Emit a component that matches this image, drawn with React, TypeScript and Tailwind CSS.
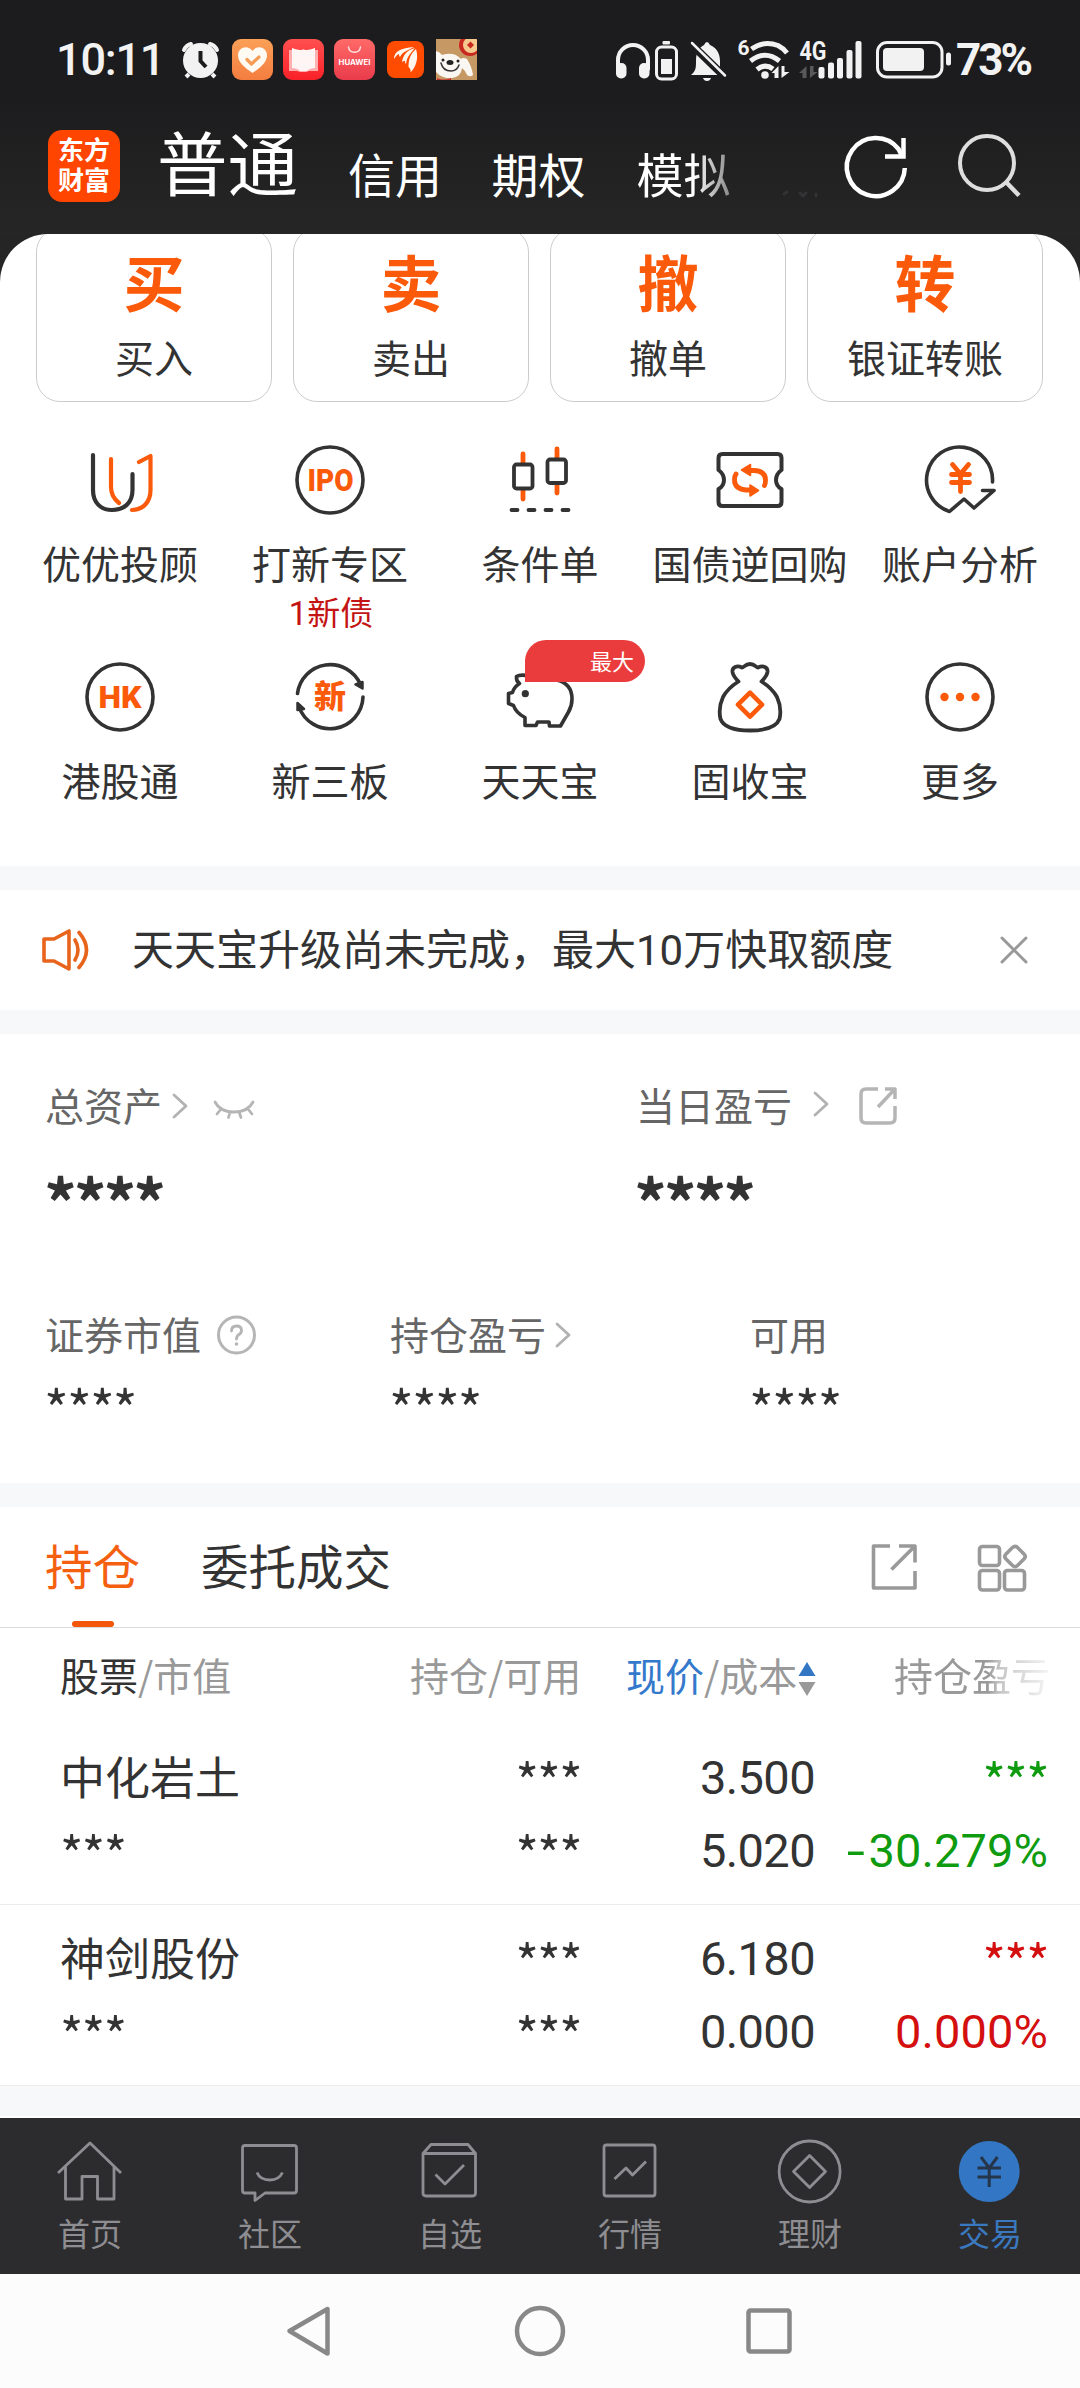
import type { ReactNode } from "react";

const INK = "#333333";
const ORANGE = "#fa5a0a";

type IconProps = { box: string; className: string; children: ReactNode };

function Icon({ box, className, children }: IconProps) {
  return (
    <svg viewBox={box} className={className} fill="none" strokeLinecap="round" strokeLinejoin="round">
      {children}
    </svg>
  );
}

function StatusBar() {
  return (
    <div className="flex h-[100px] pt-[39px]">
      <span className="ml-[56px] w-[122px] whitespace-nowrap font-['Roboto'] text-[45px] font-medium leading-[42px] tracking-[-1.2px] text-[#f2f2f2]">
        10:11
      </span>
      <Icon box="178 37 304 46" className="-mt-[2px] h-[46px] w-[304px] shrink-0">
        <g stroke="#f2f2f2" strokeWidth="5">
          <path d="M189 74l-3 3M212 74l3 3" strokeLinecap="butt" strokeWidth="4" />
          <path d="M184 50a11 11 0 0 1 7-6M217 50a11 11 0 0 0-7-6" strokeWidth="4" />
        </g>
        <circle cx="200.5" cy="60.500" r="17.500" fill="#f2f2f2" />
        <path d="M200.500 51v10l5.500 6" stroke="#1c1c1e" strokeWidth="4" strokeLinecap="butt" strokeLinejoin="miter" />
        <defs>
          <linearGradient id="health" x1="0" y1="0" x2="0" y2="1">
            <stop stopColor="#fca057" />
            <stop offset="1" stopColor="#f47d3f" />
          </linearGradient>
          <linearGradient id="reader" x1="0" y1="0" x2="0" y2="1">
            <stop stopColor="#ff5050" />
            <stop offset="1" stopColor="#fa2128" />
          </linearGradient>
          <linearGradient id="store" x1="0" y1="0" x2="0" y2="1">
            <stop stopColor="#ff6a68" />
            <stop offset="1" stopColor="#e93b4b" />
          </linearGradient>
          <clipPath id="dog">
            <rect x="436" y="39" width="41" height="41" />
          </clipPath>
        </defs>
        <rect x="232" y="39" width="41" height="41" rx="9" fill="url(#health)" />
        <path d="M252.500 73C244 67 238 62 238 55.500C238 47 248 44.500 252.500 51C257 44.500 267 47 267 55.500C267 62 261 67 252.500 73Z" fill="#fffaf2" />
        <path d="M247 59.500l4.500 4.500l7.500-7" stroke="#f49b55" strokeWidth="3.200" />
        <rect x="283" y="39" width="41" height="41" rx="9" fill="url(#reader)" />
        <path d="M289 50l3 0v-2q6 3 11.500 1.500q5.500 1.500 11.500-1.500v2l3 0v21h-9l-3 1h-6l-3-1h-8z" fill="#ffb0ae" />
        <path d="M292 48q6 3 11.500 1.500q5.500 1.500 11.500-1.500v20q-5 0-8 3h-7q-3-3-8-3z" fill="#fff5f4" />
        <rect x="334" y="39" width="41" height="41" rx="9" fill="url(#store)" />
        <path d="M348.500 47c1 7 11 7 12 0" stroke="#ffe3e3" strokeWidth="1.500" />
        <text x="338.500" y="65" textLength="32" lengthAdjust="spacingAndGlyphs" fontFamily="Inter" fontSize="7.200" fontWeight="700" fill="#fff">
          HUAWEI
        </text>
        <rect x="387" y="41" width="37" height="37" rx="8" fill="#ff4c00" />
        <path d="M394 59c0-8 7-11 20-12c-5 3-11 4-14 10c-1-1-1-2-1-3c-3 1-3 3-5 5zM402 62c1-7 5-12 13-14c-4 5-8 8-9 16c-1-1-1-2-1-3c-1 0-2 0-3 1zM408.500 67c0-8 2-13 7.500-18c2.500 8 1 17-5.500 23.500c.5-3-.5-4-2-5.500z" fill="#fff6ee" />
        <g clipPath="url(#dog)">
          <rect x="436" y="39" width="41" height="41" fill="#c69864" />
          <path d="M436 51q4 1 6 4q12-4 19 4q2-2 6 0q5 8 6 16q-5 4-8-4l-3-3q-1 9-10 10q-10 1-16-6z" fill="#faf7f3" />
          <path d="M441 63q2 8 10 8q6 0 8-6" stroke="#333" strokeWidth="1.500" />
          <ellipse cx="450" cy="62.500" rx="3.500" ry="2.500" fill="#222" />
          <circle cx="443" cy="60" r="1.500" fill="#222" />
          <circle cx="458" cy="61" r="1.500" fill="#222" />
          <path d="M437 78q6 3 14 0v3h-14z" fill="#c9302c" />
          <circle cx="470" cy="45" r="11" fill="#c8281f" />
          <circle cx="471" cy="45" r="8" fill="#f6c98e" />
          <path d="M470.500 41.500l3.500 3.500l-3.500 3.500l-3.500-3.500z" fill="#c8281f" />
        </g>
      </Icon>
      <Icon box="610 37 345 46" className="-mt-[2px] ml-[128px] h-[46px] w-[345px] shrink-0">
        <path d="M618 69V60a15 15 0 0 1 30 0V69" stroke="#f2f2f2" strokeWidth="4" />
        <rect x="616" y="63" width="10.500" height="15.500" rx="5" fill="#f2f2f2" />
        <rect x="639" y="63" width="10.500" height="15.500" rx="5" fill="#f2f2f2" />
        <rect x="662.500" y="41" width="7.500" height="3.500" rx="1" fill="#f2f2f2" />
        <rect x="656.500" y="47" width="20" height="32" rx="5" stroke="#f2f2f2" strokeWidth="3" />
        <rect x="661" y="59" width="11" height="15" fill="#f2f2f2" />
        <path d="M691 75c5-4 5-7 5-15c0-8 4-13 8-15q3-6 6 0c7 3 10 9 10 16v6c0 3 4 5 5 8z" fill="#f2f2f2" />
        <path d="M703 78h8q-1 3-4 3t-4-3z" fill="#f2f2f2" />
        <path d="M690 43l35 34" stroke="#1c1c1e" strokeWidth="8" strokeLinecap="butt" />
        <path d="M692 43l33 32.500" stroke="#f2f2f2" strokeWidth="2.500" />
        <text x="737.500" y="55" fontFamily="Roboto" fontSize="21" fontWeight="700" fill="#f2f2f2">
          6
        </text>
        <g stroke="#f2f2f2" strokeWidth="5" strokeLinecap="butt">
          <path d="M751.500 49Q764 40 778 45.500Q783 48 787 53" />
          <path d="M750.500 61Q765 49.500 779.500 61" />
          <path d="M757 69.500Q765 63 773 69" />
        </g>
        <circle cx="765" cy="75" r="3.800" fill="#f2f2f2" />
        <path d="M778.500 66v12h-4v-5h-3zM781.500 78V66h3v6h5z" fill="#f2f2f2" />
        <text x="799.500" y="59.500" textLength="27" lengthAdjust="spacingAndGlyphs" fontFamily="Roboto" fontSize="25" fontWeight="700" fill="#f2f2f2">
          4G
        </text>
        <path d="M806.500 66v12h-4v-5h-3.500zM810 78V66h3.500v6h4z" fill="#58585a" />
        <g fill="#f2f2f2">
          <rect x="818.500" y="67" width="6" height="11.500" rx="2" />
          <rect x="828" y="62.500" width="6" height="16" rx="2" />
          <rect x="837" y="58" width="6" height="20.500" rx="2" />
          <rect x="846.500" y="50" width="6" height="28.500" rx="2" />
          <rect x="855.500" y="41" width="6" height="37.500" rx="2" />
          <rect x="883" y="48" width="41" height="23" rx="4" />
          <rect x="946" y="52.500" width="5" height="13" rx="2.500" />
        </g>
        <rect x="877.500" y="42.500" width="64.500" height="34.500" rx="9.500" stroke="#f2f2f2" strokeWidth="3" />
      </Icon>
      <span className="ml-[1px] whitespace-nowrap font-['Roboto'] text-[44px] font-bold leading-[42px] tracking-[-3px] text-[#f2f2f2]">
        73%
      </span>
    </div>
  );
}

function AccountHeader() {
  return (
    <div className="flex h-[134px] text-white">
      <div className="ml-[48px] mt-[30px] flex h-[72px] w-[72px] shrink-0 flex-col items-center rounded-[14px] bg-[#ff4500] pt-[4px] text-[26px] font-bold leading-[30px]">
        <span>东方</span>
        <span>财富</span>
      </div>
      <span className="ml-[37px] mt-[20px] w-[191px] shrink-0 text-[70.500px] leading-[80px]">普通</span>
      <span className="mt-[48px] w-[143.500px] shrink-0 text-[47px] leading-[50px]">信用</span>
      <span className="mt-[48px] w-[145px] shrink-0 text-[47px] leading-[50px]">期权</span>
      <span className="mt-[48px] w-[94px] shrink-0 text-[47px] leading-[50px] [mask-image:linear-gradient(90deg,#000_60%,rgba(0,0,0,0.45)_100%)]">
        模拟
      </span>
      <Icon box="780 130 250 76" className="ml-[49px] mt-[30px] h-[76px] w-[250px] shrink-0">
        <path d="M784 194l3-2M800 193l3 3l3-3M816 194v2" stroke="#333335" strokeWidth="3" />
        <path d="M904.800 168A29 29 0 1 1 898.500 149L902 156" stroke="#fff" strokeWidth="4.500" strokeLinecap="butt" />
        <path d="M903.500 138v18.500h-18.500" stroke="#fff" strokeWidth="4.500" strokeLinecap="butt" strokeLinejoin="miter" />
        <circle cx="987" cy="163" r="27" stroke="#dedede" strokeWidth="4" />
        <path d="M1006 182l13 13.500" stroke="#dedede" strokeWidth="4.500" strokeLinecap="butt" />
      </Icon>
    </div>
  );
}

const trades = [
  ["买", "买入"],
  ["卖", "卖出"],
  ["撤", "撤单"],
  ["转", "银证转账"],
];

function TradeCards() {
  return (
    <div className="-mt-[6px] flex h-[174px] gap-[21px] pl-[36px]">
      {trades.map(([glyph, label]) => (
        <div key={label} className="flex w-[236px] shrink-0 flex-col items-center rounded-[24px] border border-[#cccccc] pt-[17px]">
          <span className="text-[61px] font-bold leading-[70px] text-[#fa5a0a]">{glyph}</span>
          <span className="mt-[15px] text-[39px] leading-[50px]">{label}</span>
        </div>
      ))}
    </div>
  );
}

function Ring({ cx, cy }: { cx: number; cy: number }) {
  return <circle cx={cx} cy={cy} r="33" stroke={INK} strokeWidth="3.600" />;
}

const shortcuts: { label: string; box: string; note?: string; badge?: string; art: ReactNode }[] = [
  {
    label: "优优投顾",
    box: "80 440 80 80",
    art: (
      <g strokeWidth="4.200">
        <path d="M93 455V490C93 503 101 510 112 510C124 510 132.500 503 132.500 490V474" stroke={INK} />
        <path d="M111 459V487C111 494 114 499 119 503M139 462L150.500 456V490C150.500 502 143 510 132 510" stroke={ORANGE} />
      </g>
    ),
  },
  {
    label: "打新专区",
    note: "1新债",
    box: "290 440 80 80",
    art: (
      <>
        <Ring cx={330} cy={480} />
        <text x="307.500" y="491.200" textLength="46" lengthAdjust="spacingAndGlyphs" fontFamily="Roboto" fontSize="31.500" fontWeight="900" fill={ORANGE}>
          IPO
        </text>
      </>
    ),
  },
  {
    label: "条件单",
    box: "500 440 80 80",
    art: (
      <>
        <path d="M523 454V499M557 449V493" stroke={ORANGE} strokeWidth="4.800" />
        <rect x="514" y="464.500" width="18.500" height="24" rx="2.500" fill="#fff" stroke={INK} strokeWidth="3.800" />
        <rect x="547.500" y="459.500" width="18.500" height="23.500" rx="2.500" fill="#fff" stroke={INK} strokeWidth="3.800" />
        <path d="M511.500 510h6M528.500 510h6M545.500 510h6M562.500 510h6" stroke={INK} strokeWidth="3.800" />
      </>
    ),
  },
  {
    label: "国债逆回购",
    box: "710 440 80 80",
    art: (
      <>
        <path
          d="M722.500 454H777.500Q781.500 454 781.500 458V470Q776 474 776 480Q776 486 781.500 489V502Q781.500 506 777.500 506H722.500Q718.500 506 718.500 502V489Q724 486 724 480Q724 474 718.500 470V458Q718.500 454 722.500 454Z"
          stroke={INK}
          strokeWidth="4"
        />
        <path d="M749 470.500H754Q765.500 471 765.500 480Q765.500 484 764.500 485.500M751 490H746Q734.500 489 734.500 480Q734.500 476 736 474" stroke={ORANGE} strokeWidth="4.800" />
        <path d="M741.500 470L750.500 464.500V475.500ZM758.500 490.500L750 485V496Z" fill={ORANGE} stroke={ORANGE} strokeWidth="1.500" />
      </>
    ),
  },
  {
    label: "账户分析",
    box: "920 440 80 80",
    art: (
      <>
        <path d="M992.500 482A33 33 0 1 0 949.500 511.500L964 499L974 508L994 490.500H982.500" stroke={INK} strokeWidth="3.600" />
        <path d="M952.500 464.500L960.500 474L968.500 464.500M960.500 474V491.500M951.500 474.500H969.500M951.500 482.500H969.500" stroke={ORANGE} strokeWidth="4.800" />
      </>
    ),
  },
  {
    label: "港股通",
    box: "80 657 80 80",
    art: (
      <>
        <Ring cx={120} cy={697} />
        <text x="98.500" y="708.200" textLength="43" lengthAdjust="spacingAndGlyphs" fontFamily="Roboto" fontSize="31.500" fontWeight="900" fill={ORANGE}>
          HK
        </text>
      </>
    ),
  },
  {
    label: "新三板",
    box: "290 657 80 80",
    art: (
      <>
        <path d="M297.500 693.500A33 33 0 0 1 360.500 684.500M363 697A33 33 0 0 1 299 707" stroke={INK} strokeWidth="3.600" />
        <path d="M355.500 684.500L362.500 682V688.500ZM297.500 703L304 709L297.500 710Z" fill={INK} stroke={INK} strokeWidth="2.500" />
        <text x="314" y="708" fontFamily="Noto Sans CJK SC" fontSize="32" fontWeight="900" fill={ORANGE}>
          新
        </text>
      </>
    ),
  },
  {
    label: "天天宝",
    badge: "最大",
    box: "500 657 80 80",
    art: (
      <>
        <path
          d="M530 676Q520 674 516.500 676.500Q516 681 519.500 683.500Q514 687 512.500 692.500L508.500 693.500V703.500L513.500 705.500Q516 713 525 717.500V725.500H536L537.500 722H549L549.500 726H560.500L568.500 712Q572 706 572 699Q572 683 556 680Q542 676 530 676Z"
          stroke={INK}
          strokeWidth="3.600"
        />
        <circle cx="525.300" cy="693.700" r="3.600" fill={INK} />
      </>
    ),
  },
  {
    label: "固收宝",
    box: "710 657 80 80",
    art: (
      <>
        <path
          d="M738.500 681.500Q728 688 723 697Q718 708 720.500 719Q725 730.500 750 730.500Q775 730.500 779.500 719Q782 708 777 697Q772 688 761.500 681.500C764 679 767 675 767.500 672C768 667 763 665 758 667.500C756 667.500 755 664 750 664C745 664 744 667.500 742 667.500C737 665 732 667 732.500 672C733 675 736 679 738.500 681.500"
          stroke={INK}
          strokeWidth="3.800"
        />
        <path d="M738 704.700L750 692.700L762 704.700L750 716.700Z" stroke={ORANGE} strokeWidth="4.600" />
      </>
    ),
  },
  {
    label: "更多",
    box: "920 657 80 80",
    art: (
      <>
        <Ring cx={960} cy={697} />
        <g fill={ORANGE}>
          <circle cx="944.500" cy="697" r="4.200" />
          <circle cx="960" cy="697" r="4.200" />
          <circle cx="975.500" cy="697" r="4.200" />
        </g>
      </>
    ),
  },
];

function Shortcuts() {
  return (
    <div className="mt-[38px] grid auto-rows-[217px] grid-cols-[repeat(5,210px)] pl-[15px]">
      {shortcuts.map((s) => (
        <div key={s.label} className="relative flex flex-col items-center">
          <Icon box={s.box} className="h-[80px] w-[80px]">
            {s.art}
          </Icon>
          <span className="mt-[17px] whitespace-nowrap text-[39px] leading-[50px]">{s.label}</span>
          {s.note && (
            <span className="ml-[2px] mt-[7px] font-['Roboto','Noto_Sans_CJK_SC'] text-[33px] leading-[40px] text-[#c41414]">{s.note}</span>
          )}
          {s.badge && (
            <span className="absolute left-[90px] top-[-17px] flex h-[42px] w-[120px] items-center justify-end rounded-[21px] rounded-bl-none bg-[#ea3c3c] pr-[11px] text-[22px] leading-[40px] text-white">
              <span className="-mt-[2px]">{s.badge}</span>
            </span>
          )}
        </div>
      ))}
    </div>
  );
}

function Notice() {
  return (
    <div className="flex h-[120px] items-center bg-white">
      <Icon box="40 925 54 50" className="ml-[40px] h-[50px] w-[54px]">
        <path d="M44 939H54L69 931V969L54 961H44Z" stroke="#e8641c" strokeWidth="3.600" />
        <path d="M75 940Q81 950 75 960M79 932.500Q94 950 79 967.500" stroke="#e8641c" strokeWidth="3.600" />
      </Icon>
      <span className="mt-[1px] ml-[38px] w-[867px] whitespace-nowrap font-['Roboto','Noto_Sans_CJK_SC'] text-[42px] leading-[50px]">
        天天宝升级尚未完成，最大10万快取额度
      </span>
      <Icon box="999 935 30 30" className="h-[30px] w-[30px]">
        <path d="M1002 938L1026 962M1026 938L1002 962" stroke="#999" strokeWidth="3" />
      </Icon>
    </div>
  );
}

function Chevron({ className }: { className: string }) {
  return (
    <Icon box="0 0 20 28" className={className}>
      <path d="M4 3L16 14L4 25" stroke="#b2b2b2" strokeWidth="2.800" />
    </Icon>
  );
}

function Assets() {
  return (
    <div className="h-[449px] bg-white pl-[45px]">
      <div className="flex pt-[45px] text-[39px] leading-[50px] text-[#666]">
        <div className="flex w-[591px]">
          <span>总资产</span>
          <Chevron className="ml-[8px] mt-[13px] h-[28px] w-[20px]" />
          <Icon box="212 1095 44 28" className="ml-[22px] mt-[16px] h-[28px] w-[44px]">
            <path d="M215 1102Q220 1112 234 1112Q248 1112 253 1102M221 1109L217 1114M230 1112L228.500 1117.500M239 1112L241 1117.500M248 1109L252 1114" stroke="#b5b5b5" strokeWidth="2.800" />
          </Icon>
        </div>
        <span>当日盈亏</span>
        <Chevron className="ml-[19px] mt-[11px] h-[28px] w-[20px]" />
        <Icon box="857 1083 44 44" className="ml-[25px] mt-[5px] h-[44px] w-[44px]">
          <path d="M879 1088H867Q862 1088 862 1093V1117Q862 1122 867 1122H891Q896 1122 896 1117V1105M886 1088H896V1098M895 1089L879 1106" stroke="#b5b5b5" strokeWidth="3.500" strokeLinecap="butt" />
        </Icon>
      </div>
      <div className="-ml-[1px] mt-[31px] flex h-[60px] text-[65px] font-bold leading-[81px] tracking-[-3.200px]">
        <span className="w-[590px]">****</span>
        <span>****</span>
      </div>
      <div className="mt-[88px] flex text-[39px] leading-[50px] text-[#666]">
        <div className="flex w-[345px]">
          <span>证券市值</span>
          <Icon box="215 1314 42 42" className="ml-[14px] mt-[6px] h-[42px] w-[42px]">
            <circle cx="236.500" cy="1335" r="18" stroke="#b5b5b5" strokeWidth="3" />
            <path d="M231.500 1331Q231.500 1326 236.500 1326Q241.500 1326 241.500 1330.500Q241.500 1333 239 1334.500Q236.500 1336 236.500 1339" stroke="#b5b5b5" strokeWidth="2.800" />
            <circle cx="236.500" cy="1344" r="1.800" fill="#b5b5b5" />
          </Icon>
        </div>
        <div className="flex w-[360px]">
          <span>持仓盈亏</span>
          <Chevron className="ml-[7px] mt-[13px] h-[28px] w-[20px]" />
        </div>
        <span>可用</span>
      </div>
      <div className="-ml-[1px] mt-[22px] flex text-[53px] leading-[54px] tracking-[-1.800px]">
        <span className="w-[345px]">****</span>
        <span className="w-[360px]">****</span>
        <span>****</span>
      </div>
    </div>
  );
}

const positions = [
  { name: "中化岩土", price: "3.500", cost: "5.020", sign: "-", pct: "30.279%", tone: "text-[#0f9b0f]" },
  { name: "神剑股份", price: "6.180", cost: "0.000", sign: "", pct: "0.000%", tone: "text-[#d40f0f]" },
];

function Holdings() {
  return (
    <div className="bg-white">
      <div className="flex h-[121px] border-b border-[#dcdcdc] pl-[45px] text-[47.500px] leading-[60px]">
        <div className="relative mt-[28px] h-[92px] w-[95px] text-[#f4600f]">
          持仓
          <span className="absolute bottom-0 left-[27px] h-[6.500px] w-[42px] rounded-[3px] bg-[#f4560a]" />
        </div>
        <span className="ml-[61px] mt-[28px] w-[665px]">委托成交</span>
        <Icon box="866 1538 166 60" className="mt-[31px] h-[60px] w-[166px]">
          <g stroke="#999" strokeWidth="3.600" strokeLinecap="butt">
            <path d="M890 1546H873.500V1588H915V1571M899 1546H915V1562.500M914 1547L891.500 1569.500" />
            <rect x="979.500" y="1546.500" width="20" height="19" rx="3" />
            <rect x="979.500" y="1570.500" width="20" height="19.500" rx="3" />
            <rect x="1004.500" y="1570.500" width="20" height="19.500" rx="3" />
            <path d="M1017.500 1547.500L1024 1554Q1026.500 1556.500 1024 1559L1017.500 1565.500Q1015 1568 1012.500 1565.500L1006 1559Q1003.500 1556.500 1006 1554L1012.500 1547.500Q1015 1545 1017.500 1547.500Z" />
          </g>
        </Icon>
      </div>
      <div className="flex h-[96px] whitespace-nowrap pt-[21px] text-[39px] leading-[50px] text-[#999]">
        <span className="ml-[60px] w-[350px]">
          <span className="text-[#333]">股票</span>/市值
        </span>
        <span className="w-[216px]">持仓/可用</span>
        <span className="w-[171px]">
          <span className="text-[#3579cc]">现价</span>/成本
        </span>
        <Icon box="797 1658 20 40" className="mt-[10px] h-[40px] w-[20px]">
          <path d="M798.500 1675L807 1661L815.500 1675Z" fill="#3377c4" />
          <path d="M798.500 1681L807 1695L815.500 1681Z" fill="#999" />
        </Icon>
        <span className="ml-[77px] [mask-image:linear-gradient(90deg,#000_60%,rgba(0,0,0,0.55)_68%,rgba(0,0,0,0.1)_100%)]">持仓盈亏</span>
      </div>
      {positions.map((p) => (
        <div key={p.name} className="grid h-[181px] grid-cols-[350px_171px_234px_233px] grid-rows-[73px_73px] border-b border-[#ebebeb] pl-[60px] pt-[16px] text-[50px] leading-[78px] tracking-[-1.500px]">
          <span className="text-[45px] leading-[72px] tracking-normal">{p.name}</span>
          <span className="text-right">***</span>
          <span className="text-right font-['Roboto'] text-[47px] leading-[76px] tracking-[-0.600px]">{p.price}</span>
          <span className={`text-right ${p.tone}`}>***</span>
          <span>***</span>
          <span className="text-right">***</span>
          <span className="text-right font-['Roboto'] text-[47px] leading-[76px] tracking-[-0.600px]">{p.cost}</span>
          <span className={`whitespace-nowrap text-right font-['Roboto'] text-[47px] leading-[76px] tracking-[0.100px] ${p.tone}`}>
            {p.sign && <span className="mr-[3px] inline-block origin-right scale-x-[1.400]">{p.sign}</span>}
            {p.pct}
          </span>
        </div>
      ))}
    </div>
  );
}

const tabs: { label: string; box: string; active?: boolean; art: ReactNode }[] = [
  {
    label: "首页",
    box: "54 2136 72 72",
    art: <path d="M58 2173L90 2143L121 2173M65.500 2167V2199H82V2176.500H97.500V2199H114V2167" />,
  },
  {
    label: "社区",
    box: "234 2136 72 72",
    art: <path d="M245 2145.500H294Q296.500 2145.500 296.500 2148V2190.500Q296.500 2193 294 2193H265L255 2200.500V2193H245Q242.500 2193 242.500 2190.500V2148Q242.500 2145.500 245 2145.500ZM257 2172.500Q260 2180 270 2180Q279 2180 282.500 2172.500" />,
  },
  {
    label: "自选",
    box: "414 2136 72 72",
    art: <path d="M423 2153.500H475.500V2193Q475.500 2196 472.500 2196H426Q423 2196 423 2193ZM423 2153.500L431 2144.500H468L475.500 2153.500M435.500 2174.500L445 2184L464 2165" />,
  },
  {
    label: "行情",
    box: "594 2136 72 72",
    art: <path d="M606.500 2145H652.500Q655 2145 655 2147.500V2193.500Q655 2196 652.500 2196H606.500Q604 2196 604 2193.500V2147.500Q604 2145 606.500 2145ZM614.500 2179L626 2168L632.500 2175L646 2161.500" />,
  },
  {
    label: "理财",
    box: "774 2136 72 72",
    art: (
      <>
        <circle cx="809.600" cy="2171.500" r="30.500" />
        <path d="M809.600 2155.500L825.500 2171.500L809.600 2187.500L793.500 2171.500Z" />
      </>
    ),
  },
  {
    label: "交易",
    box: "954 2136 72 72",
    active: true,
    art: (
      <>
        <circle cx="989.200" cy="2171.500" r="30.500" fill="#3377c4" stroke="none" />
        <path d="M981 2157L989.200 2168L997.500 2157M989.200 2168V2187M977.500 2168H1001M977.500 2177H1001" stroke="#26364a" strokeWidth="3" strokeLinecap="butt" />
      </>
    ),
  },
];

function TabBar() {
  return (
    <div className="grid h-[156px] grid-cols-6 bg-[#2c2c2e] pt-[18px]">
      {tabs.map((t) => (
        <div key={t.label} className="flex flex-col items-center">
          <svg viewBox={t.box} className="h-[72px] w-[72px]" fill="none" stroke="#8e8e92" strokeWidth="2.800" strokeLinejoin="round">
            {t.art}
          </svg>
          <span className={`mt-[4px] text-[32px] leading-[40px] ${t.active ? "text-[#3a78bf]" : "text-[#8e8e92]"}`}>{t.label}</span>
        </div>
      ))}
    </div>
  );
}

function SystemNav() {
  return (
    <div className="flex h-[114px] justify-center bg-[#fcfcfc]">
      <svg viewBox="280 2274 520 114" className="h-[114px] w-[520px]" fill="none" stroke="#888" strokeWidth="4.500" strokeLinejoin="round">
        <path d="M289.500 2331L327.500 2309V2353.500Z" />
        <circle cx="540" cy="2331" r="23" />
        <rect x="748.500" y="2310.500" width="41" height="41" rx="2" />
      </svg>
    </div>
  );
}

export default function App() {
  return (
    <div className="h-[2388px] w-[1080px] overflow-hidden bg-[#f7f8fa] font-['Noto_Sans_CJK_SC',sans-serif] text-[#333]">
      <div className="bg-[#252525]">
        <div className="h-[234px] bg-gradient-to-b from-[#1c1c1e] from-40% to-[#262626]">
          <StatusBar />
          <AccountHeader />
        </div>
        <div className="h-[632px] overflow-hidden rounded-t-[48px] bg-white">
          <TradeCards />
          <Shortcuts />
        </div>
      </div>
      <div className="h-[24px]" />
      <Notice />
      <div className="h-[24px]" />
      <Assets />
      <div className="h-[24px]" />
      <Holdings />
      <div className="h-[30px]" />
      <div className="h-[2px] bg-white" />
      <TabBar />
      <SystemNav />
    </div>
  );
}
